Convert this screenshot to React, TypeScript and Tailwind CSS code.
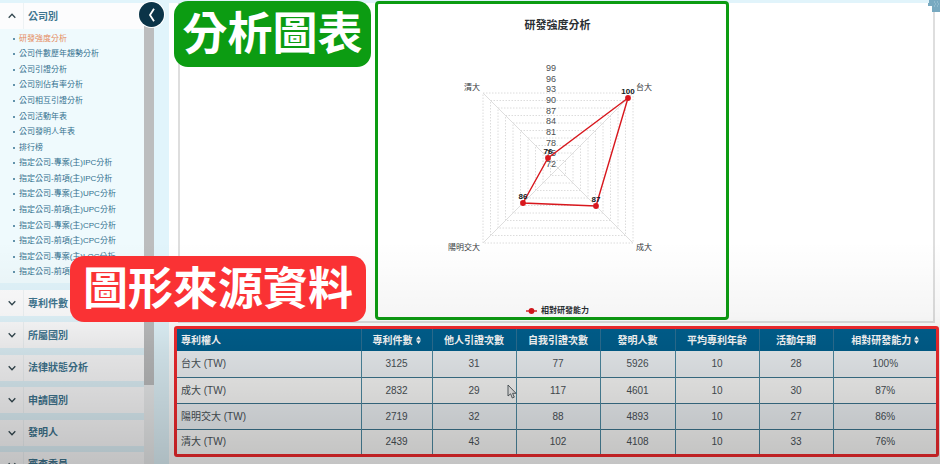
import React from 'react';

const analyses = [
  '研發強度分析',
  '公司件數歷年趨勢分析',
  '公司引證分析',
  '公司別佔有率分析',
  '公司相互引證分析',
  '公司活動年表',
  '公司發明人年表',
  '排行榜',
  '指定公司-專案(主)IPC分析',
  '指定公司-前項(主)IPC分析',
  '指定公司-專案(主)UPC分析',
  '指定公司-前項(主)UPC分析',
  '指定公司-專案(主)CPC分析',
  '指定公司-前項(主)CPC分析',
  '指定公司-專案(主)LOC分析',
  '指定公司-前項(主)LOC分析',
];

const sections = ['專利件數', '所屬國別', '法律狀態分析', '申請國別', '發明人', '審查委員'];

const columns = [
  { label: '專利權人', width: 'w-[184px]', sortable: false },
  { label: '專利件數', width: 'w-[71px]', sortable: true },
  { label: '他人引證次數', width: 'w-[84px]', sortable: false },
  { label: '自我引證次數', width: 'w-[84px]', sortable: false },
  { label: '發明人數', width: 'w-[75px]', sortable: false },
  { label: '平均專利年齡', width: 'w-[84px]', sortable: false },
  { label: '活動年期', width: 'w-[74px]', sortable: false },
  { label: '相對研發能力', width: 'w-[104px]', sortable: true },
];

const rows = [
  ['台大 (TW)', '3125', '31', '77', '5926', '10', '28', '100%'],
  ['成大 (TW)', '2832', '29', '117', '4601', '10', '30', '87%'],
  ['陽明交大 (TW)', '2719', '32', '88', '4893', '10', '27', '86%'],
  ['清大 (TW)', '2439', '43', '102', '4108', '10', '33', '76%'],
];

function Chevron({ up = false }: { up?: boolean }) {
  return (
    <svg width="8" height="6" viewBox="0 0 8 6" fill="none" stroke="#33474f" strokeWidth="1.3" aria-hidden="true">
      <path d={up ? 'M0.7 4.7 4 1.3l3.3 3.4' : 'M0.7 1.3 4 4.7l3.3-3.4'} />
    </svg>
  );
}

function SectionButton({ label, open = false }: { label: string; open?: boolean }) {
  return (
    <button
      type="button"
      aria-expanded={open}
      className="flex h-[26px] w-full shrink-0 items-center bg-[#fcfcfd] text-left text-[10px] font-bold text-[#3f758f]"
    >
      <span className="flex h-full w-6 items-center justify-center border-r border-[#eef2f4]">
        <Chevron up={open} />
      </span>
      <span className="pl-1">{label}</span>
    </button>
  );
}

function Sidebar() {
  return (
    <aside className="relative flex w-[169px] shrink-0 bg-[#e1f4fb] pt-[3px]">
      <nav className="flex w-36 flex-col">
        <SectionButton label="公司別" open />
        <ul className="flex h-[254px] shrink-0 flex-col bg-[#effafd] pt-[2px] pb-[3px] text-[8px] text-[#34718f]">
          {analyses.map((name, i) => (
            <li key={name} className="flex flex-1 items-center">
              <a
                href="#"
                className={
                  i === 0
                    ? 'flex items-center gap-1 pl-[13px] leading-3 whitespace-nowrap text-[#e58a5c]'
                    : 'flex items-center gap-1 pl-[13px] leading-3 whitespace-nowrap'
                }
              >
                <span className="size-[2px] rounded-full bg-[#34718f]" />
                {name}
              </a>
            </li>
          ))}
        </ul>
        <div className="mt-[7px] flex h-[188px] shrink-0 flex-col justify-between">
          {sections.map((name) => (
            <SectionButton key={name} label={name} />
          ))}
        </div>
      </nav>
      <div className="w-[10px] bg-[#eceeef]">
        <div className="h-[382px] bg-[#bcbdbe]" />
      </div>
      <button
        type="button"
        aria-label="收合選單"
        className="absolute top-[2px] left-[139px] flex size-[25px] items-center justify-center rounded-full bg-[#0b3448] ring-1 ring-white"
      >
        <svg width="8" height="14" viewBox="0 0 8 14" fill="none" stroke="white" strokeWidth="1.8" aria-hidden="true">
          <path d="M6 0.8 2 7 6 13.2" />
        </svg>
      </button>
    </aside>
  );
}

const CX = 180;
const CY = 122;
const points = [
  { x: 250, y: 52, value: 100 },
  { x: 218, y: 160, value: 87 },
  { x: 145, y: 157, value: 86 },
  { x: 170, y: 112, value: 76 },
];
const ticks = [99, 96, 93, 90, 87, 84, 81, 78, 75, 72];

function RadarChart() {
  return (
    <svg viewBox="0 0 348 215" className="h-[215px] w-full" role="img" aria-label="研發強度分析">
      <g fill="none" stroke="#dcdcdc" strokeDasharray="1.5 1.5">
        {ticks.map((t, i) => {
          const r = 7.5 * (i + 1);
          return <rect key={t} x={CX - r} y={CY - r} width={r * 2} height={r * 2} />;
        })}
      </g>
      <path d="M105 47 255 197M255 47 105 197" stroke="#dedede" fill="none" />
      <g fill="#4c4f52" fontSize="9" textAnchor="middle">
        {ticks.map((t, i) => (
          <text key={t} x={173} y={25 + i * 10.67}>
            {t}
          </text>
        ))}
      </g>
      <g fill="#34383b" fontSize="8">
        <text x={102} y={44} textAnchor="end">清大</text>
        <text x={258} y={44}>台大</text>
        <text x={102} y={204} textAnchor="end">陽明交大</text>
        <text x={258} y={204}>成大</text>
      </g>
      <polygon
        points={points.map((p) => `${p.x},${p.y}`).join(' ')}
        fill="none"
        stroke="#d8171d"
        strokeWidth="1.4"
      />
      {points.map((p) => (
        <circle key={p.value} cx={p.x} cy={p.y} r="2.9" fill="#d8171d" />
      ))}
      <g fill="#111820" fontSize="8" fontWeight="bold" textAnchor="middle">
        {points.map((p) => (
          <text key={p.value} x={p.x} y={p.y - 4}>
            {p.value}
          </text>
        ))}
      </g>
    </svg>
  );
}

function SortIcon() {
  return (
    <svg width="5" height="8" viewBox="0 0 5 8" fill="white" aria-hidden="true">
      <path d="M2.5 0 5 3.4H0zM2.5 8 0 4.6h5z" />
    </svg>
  );
}

function DataTable() {
  return (
    <div className="mr-px ml-[5px] overflow-hidden rounded-[3px] border-3 border-[#f52a2e]">
      <table className="w-full table-fixed border-collapse text-[10px] leading-[15px] text-[#4a5257]">
        <thead>
          <tr className="h-[22px] bg-[#00608f] text-white">
            {columns.map((c, i) => (
              <th
                key={c.label}
                scope="col"
                className={`${c.width} border-r border-[#2d7195] p-0 font-bold whitespace-nowrap last:border-r-0 ${i === 0 ? 'pl-1 text-left' : ''}`}
              >
                {c.sortable ? (
                  <button type="button" className="inline-flex items-center gap-[3px]">
                    {c.label}
                    <SortIcon />
                  </button>
                ) : (
                  c.label
                )}
              </th>
            ))}
          </tr>
        </thead>
        <tbody>
          {rows.map((row) => (
            <tr key={row[0]} className="h-[26px] border-b border-[#3d7690] odd:bg-[#f0f4f7] even:bg-[#fcfcfb] last:h-[25px] last:border-b-0">
              {row.map((cell, i) => (
                <td
                  key={columns[i].label}
                  className={
                    i === 0
                      ? 'border-r border-[#4e8ba3] p-0 pl-1'
                      : 'border-r border-[#4e8ba3] p-0 text-center last:border-r-0'
                  }
                >
                  {cell}
                </td>
              ))}
            </tr>
          ))}
        </tbody>
      </table>
    </div>
  );
}

export default function App() {
  return (
    <div className="relative flex h-screen overflow-hidden bg-white font-['Liberation_Sans','Noto_Sans_CJK_TC',sans-serif]">
      <Sidebar />
      <main className="relative min-w-0 flex-1 border-t-[3px] border-[#e1f4fb]">
        <section className="mr-[5px] ml-[9px] flex h-[320px] justify-center border-x-2 border-b-2 border-[#dedede] pr-[10px]">
          <figure className="-mt-[2px] flex h-[319px] w-[354px] flex-col items-center rounded-[4px] border-3 border-[#0c9c12]">
            <figcaption className="mt-[13px] pl-3 text-[11px] leading-4 font-bold text-[#2b2f33]">研發強度分析</figcaption>
            <div className="mt-[13px] w-full">
              <RadarChart />
            </div>
            <p className="mt-auto flex items-center gap-1 pl-3 text-[8px] leading-3 font-bold text-[#2b2f33]">
              <svg width="11" height="6" viewBox="0 0 11 6" aria-hidden="true">
                <path d="M0 3h11" stroke="#d8171d" strokeWidth="1.4" />
                <circle cx="5.5" cy="3" r="2.9" fill="#d8171d" />
              </svg>
              相對研發能力
            </p>
          </figure>
        </section>
        <div className="pt-[3px]">
          <DataTable />
        </div>
        <svg className="absolute -top-[3px] right-0" width="12" height="12" viewBox="0 0 12 12" aria-hidden="true">
          <path d="M1 0h11v12H4V6H0V3h1z" fill="#78a9c0" />
          <path d="M6 2h1M9 2h1M7 4h1M10 4h1M6 6h1M9 6h1" stroke="#a9cbdb" />
        </svg>
        <svg className="absolute top-[381px] left-[338px]" width="10" height="15" viewBox="0 0 10 15" aria-hidden="true">
          <path d="M1 1v11l2.6-2.2L5.3 14l2-.9-1.7-3.8H9z" fill="#f2f2f2" stroke="#4b5358" strokeWidth="0.9" />
        </svg>
      </main>
      <div className="pointer-events-none absolute inset-0 bg-[linear-gradient(to_bottom,transparent_52%,rgba(0,0,0,0.04)_68%,rgba(0,0,0,0.1)_76%,rgba(0,0,0,0.23)_100%)]" />
      <strong className="absolute top-px left-[174px] flex h-[66px] w-[197px] items-center justify-center rounded-[14px] bg-[#0c9c12] text-[45px] leading-none font-bold text-white">
        分析圖表
      </strong>
      <strong className="absolute top-[256px] left-[70px] flex h-[66px] w-[296px] items-center justify-center rounded-[14px] bg-[#fa3234] text-[45px] leading-none font-bold text-white">
        圖形來源資料
      </strong>
    </div>
  );
}
